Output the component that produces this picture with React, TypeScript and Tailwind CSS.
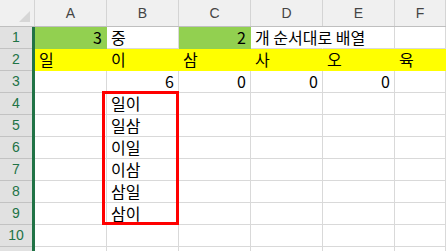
type Cell = {
  text?: string
  right?: boolean
  fill?: string
  spill?: boolean
}

const letters = ['A', 'B', 'C', 'D', 'E', 'F']

const GREEN = 'bg-[#92d050] border-[#92d050]'
const YELLOW = 'bg-[#ffff00] border-[#ffff00]'

const rows: Cell[][] = [
  [
    { text: '3', right: true, fill: GREEN },
    { text: '중' },
    { text: '2', right: true, fill: GREEN },
    { text: '개 순서대로 배열', spill: true },
    {},
    {},
  ],
  [
    { text: '일', fill: YELLOW },
    { text: '이', fill: YELLOW },
    { text: '삼', fill: YELLOW },
    { text: '사', fill: YELLOW },
    { text: '오', fill: YELLOW },
    { text: '육', fill: YELLOW },
  ],
  [{}, { text: '6', right: true }, { text: '0', right: true }, { text: '0', right: true }, { text: '0', right: true }, {}],
  [{}, { text: '일이' }, {}, {}, {}, {}],
  [{}, { text: '일삼' }, {}, {}, {}, {}],
  [{}, { text: '이일' }, {}, {}, {}, {}],
  [{}, { text: '이삼' }, {}, {}, {}, {}],
  [{}, { text: '삼일' }, {}, {}, {}, {}],
  [{}, { text: '삼이' }, {}, {}, {}, {}],
  [{}, {}, {}, {}, {}, {}],
  [{}, {}, {}, {}, {}, {}],
]

function GridCell({ cell, last }: { cell: Cell; last: boolean }) {
  const width = last ? 'flex-1 min-w-0' : 'w-[72px] shrink-0'
  const colour = cell.fill ?? (cell.spill ? 'bg-white border-b-[#d9d9d9] border-r-white' : 'bg-white border-[#d9d9d9]')
  return (
    <div
      className={`${width} ${colour} relative h-[22px] border-r border-b px-[4px] text-[16px] leading-[21px] text-black whitespace-nowrap ${
        cell.right ? 'text-right' : 'text-left'
      } ${cell.spill ? 'z-10' : ''}`}
    >
      {cell.text}
    </div>
  )
}

export default function App() {
  return (
    <div
      className="relative w-[446px] h-[251px] overflow-hidden bg-white"
      style={{ fontFamily: '"Noto Sans CJK KR", "Noto Sans", sans-serif' }}
    >
      {/* column letters */}
      <div className="flex h-[27px] bg-[#f0f0f0] border-b border-[#bfbfbf]">
        <div className="relative w-[35px] shrink-0 border-r border-[#d4d4d4]">
          <svg className="absolute left-[19px] top-[11px]" width="11" height="11" viewBox="0 0 11 11">
            <polygon points="11,0 11,11 0,11" fill="#d6d6d6" />
          </svg>
        </div>
        {letters.map((l, i) => (
          <div
            key={l}
            className={`${i === 5 ? 'flex-1' : 'w-[72px] shrink-0'} border-r border-[#d4d4d4] flex items-center justify-center text-[14px] text-[#444444]`}
            style={{ fontFamily: '"Liberation Sans", Arial, sans-serif' }}
          >
            {l}
          </div>
        ))}
      </div>

      {rows.map((row, r) => (
        <div key={r} className="flex h-[22px]">
          <div
            className="w-[32px] shrink-0 bg-[#e1e1e1] border-b border-[#c2c2c2] flex items-center justify-center text-[14px] text-[#217346]"
            style={{ fontFamily: '"Liberation Sans", Arial, sans-serif' }}
          >
            {r < 10 ? r + 1 : ''}
          </div>
          <div className="w-[3px] shrink-0 bg-[#217346]" />
          {row.map((cell, c) => (
            <GridCell key={c} cell={cell} last={c === 5} />
          ))}
        </div>
      ))}

      {/* outline round B4:B9 */}
      <div className="absolute left-[102px] top-[91px] w-[77px] h-[134px] border-[3px] border-[#ff0000] pointer-events-none" />
    </div>
  )
}
